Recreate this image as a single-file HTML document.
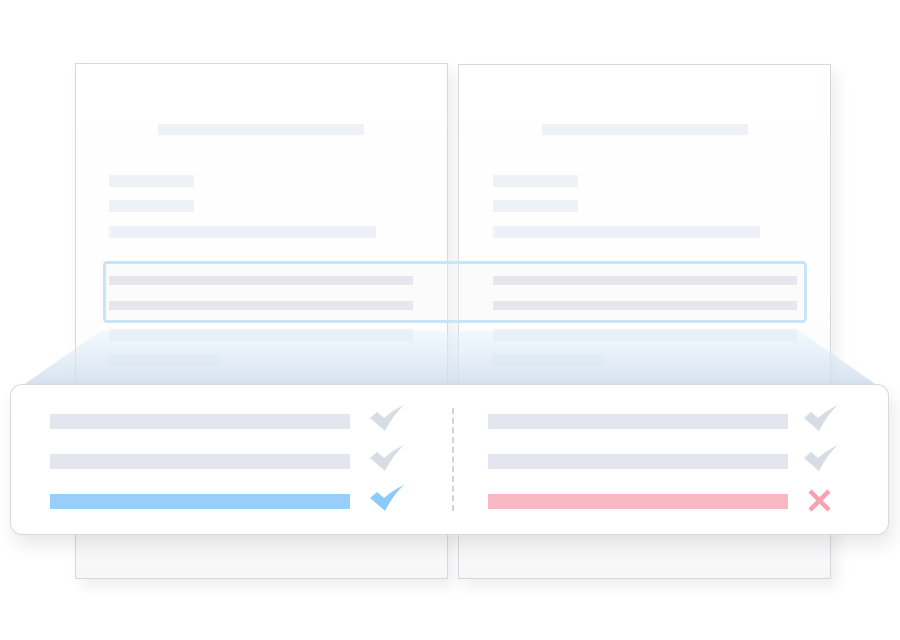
<!DOCTYPE html><html><head><style>
body{margin:0;width:900px;height:640px;background:#fff;position:relative;overflow:hidden;font-family:"Liberation Sans",sans-serif}
.a{position:absolute}
.pg{position:absolute;border:1.5px solid #d5d7e1;background:linear-gradient(#fff 0%,#fdfdfe 60%,#f7f7f8 100%);box-shadow:6px 8px 14px rgba(0,0,0,.07)}
.b{position:absolute;background:#eef1f5}
.h{position:absolute;background:#dcdfe7}
</style></head><body>
<div class="pg" style="left:75px;top:63px;width:371px;height:514px"></div>
<div class="pg" style="left:458px;top:64px;width:371px;height:513px"></div>
<div class="b" style="left:158px;top:124px;width:206px;height:11px"></div>
<div class="b" style="left:109px;top:175px;width:85px;height:12px"></div>
<div class="b" style="left:109px;top:200px;width:85px;height:12px"></div>
<div class="b" style="left:109px;top:226px;width:267px;height:12px"></div>
<div class="h" style="left:109px;top:276px;width:304px;height:9px"></div>
<div class="h" style="left:109px;top:301px;width:304px;height:9px"></div>
<div class="b" style="left:109px;top:329px;width:304px;height:12px"></div>
<div class="b" style="left:109px;top:354px;width:110px;height:12px"></div>
<div class="b" style="left:542px;top:124px;width:206px;height:11px"></div>
<div class="b" style="left:493px;top:175px;width:85px;height:12px"></div>
<div class="b" style="left:493px;top:200px;width:85px;height:12px"></div>
<div class="b" style="left:493px;top:226px;width:267px;height:12px"></div>
<div class="h" style="left:493px;top:276px;width:304px;height:9px"></div>
<div class="h" style="left:493px;top:301px;width:304px;height:9px"></div>
<div class="b" style="left:493px;top:329px;width:304px;height:12px"></div>
<div class="b" style="left:493px;top:354px;width:110px;height:12px"></div>
<div class="a" style="left:103px;top:261px;width:698px;height:56px;border:3px solid #c8e4fb;border-radius:4px;background:rgba(250,245,248,.35)"></div>
<svg class="a" style="left:0;top:0" width="900" height="640">
<defs><linearGradient id="g" x1="0" y1="0" x2="0" y2="1"><stop offset="0" stop-color="#e3f2fd" stop-opacity=".45"/><stop offset="1" stop-color="#cfdcea" stop-opacity=".85"/></linearGradient></defs>
<polygon points="100,331 800,331 878,386 22,386" fill="url(#g)"/>
</svg>
<div class="a" style="left:10px;top:384px;width:877px;height:149px;border:1.5px solid #d6d9e2;border-radius:12px;background:#fff;box-shadow:4px 10px 18px rgba(0,0,0,.09)"></div>
<div class="a" style="left:50px;top:414px;width:300px;height:15px;background:#e3e6ee"></div>
<div class="a" style="left:50px;top:454px;width:300px;height:15px;background:#e3e6ee"></div>
<div class="a" style="left:50px;top:494px;width:300px;height:15px;background:#99cefa"></div>
<div class="a" style="left:488px;top:414px;width:300px;height:15px;background:#e3e6ee"></div>
<div class="a" style="left:488px;top:454px;width:300px;height:15px;background:#e3e6ee"></div>
<div class="a" style="left:488px;top:494px;width:300px;height:15px;background:#f8b7c2"></div>
<div class="a" style="left:452px;top:408px;width:0;height:103px;border-left:2px dashed #d3d3d6"></div>
<svg class="a" style="left:0;top:0" width="900" height="640">
<g fill="#d8dce5">
<path d="M370,418 L377,412 L384,418 Q393,410 404,405 Q393,415 385,431 Z"/>
<path d="M370,458 L377,452 L384,458 Q393,450 404,445 Q393,455 385,471 Z"/>
<path d="M804,418 L811,412 L818,418 Q827,410 838,405 Q827,415 819,431 Z"/>
<path d="M804,458 L811,452 L818,458 Q827,450 838,445 Q827,455 819,471 Z"/>
</g>
<path fill="#8ccbf9" d="M370,498 L377,492 L384,498 Q393,490 404,485 Q393,495 385,511 Z"/>
<path d="M810,491 L829,510 M829,491 L810,510" stroke="#f5a3b2" stroke-width="4.5"/>
</svg>
</body></html>
